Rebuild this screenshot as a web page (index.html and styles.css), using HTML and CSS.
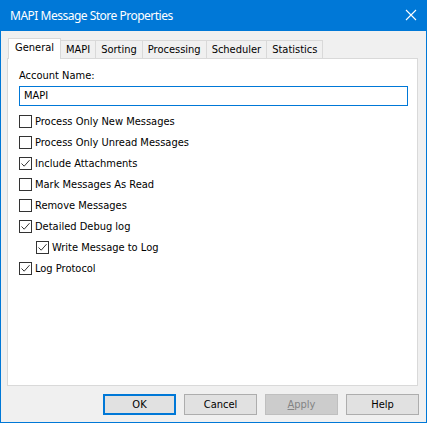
FILE: index.html
```html
<!DOCTYPE html>
<html>
<head>
<meta charset="utf-8">
<link rel="stylesheet" href="styles.css">
</head>
<body>
<div class="window">
  <div class="titlebar">
    <span class="title">MAPI Message Store Properties</span>
    <svg class="close" width="12" height="12" viewBox="0 0 12 12"><path d="M1 1 L11 11 M11 1 L1 11" stroke="#fff" stroke-width="1.1" fill="none"/></svg>
  </div>
  <div class="body">
    <div class="tabs">
      <div class="tab active">General</div>
      <div class="tab">MAPI</div>
      <div class="tab">Sorting</div>
      <div class="tab">Processing</div>
      <div class="tab">Scheduler</div>
      <div class="tab">Statistics</div>
    </div>
    <div class="panel">
      <div class="label">Account Name:</div>
      <div class="textbox">MAPI</div>
      <div class="checks">
        <div class="row"><span class="cb"></span><span>Process Only New Messages</span></div>
        <div class="row"><span class="cb"></span><span>Process Only Unread Messages</span></div>
        <div class="row"><span class="cb on"><svg width="11" height="11" viewBox="0 0 11 11"><path d="M1.5 5.5 L4.2 8.2 L9.5 2.2" stroke="#333" stroke-width="1" fill="none"/></svg></span><span>Include Attachments</span></div>
        <div class="row"><span class="cb"></span><span>Mark Messages As Read</span></div>
        <div class="row"><span class="cb"></span><span>Remove Messages</span></div>
        <div class="row"><span class="cb on"><svg width="11" height="11" viewBox="0 0 11 11"><path d="M1.5 5.5 L4.2 8.2 L9.5 2.2" stroke="#333" stroke-width="1" fill="none"/></svg></span><span>Detailed Debug log</span></div>
        <div class="row indent"><span class="cb on"><svg width="11" height="11" viewBox="0 0 11 11"><path d="M1.5 5.5 L4.2 8.2 L9.5 2.2" stroke="#333" stroke-width="1" fill="none"/></svg></span><span>Write Message to Log</span></div>
        <div class="row"><span class="cb on"><svg width="11" height="11" viewBox="0 0 11 11"><path d="M1.5 5.5 L4.2 8.2 L9.5 2.2" stroke="#333" stroke-width="1" fill="none"/></svg></span><span>Log Protocol</span></div>
      </div>
    </div>
    <div class="buttons">
      <div class="btn default">OK</div>
      <div class="btn">Cancel</div>
      <div class="btn disabled"><u>A</u>pply</div>
      <div class="btn">Help</div>
    </div>
  </div>
</div>
</body>
</html>
```
FILE: styles.css
```css
* { box-sizing: border-box; }
html, body { margin: 0; padding: 0; background: #ffffff; }
body { font-family: "DejaVu Sans Condensed", "DejaVu Sans", sans-serif; font-stretch: condensed; font-size: 11px; color: #000; }
.window {
  width: 427px; height: 423px;
  border: 1px solid #0078d7; border-top: 0;
  background: #f0f0f0;
  display: flex; flex-direction: column;
}
.titlebar {
  height: 31px; background: #0078d7;
  display: flex; align-items: center; justify-content: space-between;
  padding: 0 9px 1px 10px;
  margin: 0 -1px;
  color: #fff;
}
.title { font-family: "Noto Sans", sans-serif; font-stretch: normal; font-size: 12px; letter-spacing: -0.5px; }
.close { margin-right: 1px; }
.body { padding: 7px 8px 0 6px; display: flex; flex-direction: column; }
.tabs { display: flex; align-items: flex-end; height: 20px; padding-left: 1px; position: relative; z-index: 1; }
.tab {
  height: 18px; border: 1px solid #d9d9d9; border-bottom: 0; margin-left: -1px;
  padding: 0 5px; line-height: 17px; background: #f0f0f0;
}
.tab:first-child { margin-left: 0; }
.tab.active {
  height: 21px; background: #fff; margin-bottom: -1px; line-height: 18px;
  padding: 0 6px; margin-right: 0;
}
.tab.active + .tab { margin-left: 0; border-left: 0; }
.panel {
  height: 328px; background: #fff; border: 1px solid #d9d9d9;
  padding: 10px 9px 0 11px;
}
.label { height: 13px; line-height: 13px; margin-bottom: 4px; }
.textbox {
  height: 20px; border: 1px solid #0078d7; padding: 0 4px; line-height: 18px;
}
.checks { margin-top: 9px; display: flex; flex-direction: column; gap: 8px; }
.row { display: flex; align-items: center; height: 13px; gap: 3px; }
.row.indent { padding-left: 17px; }
.cb {
  width: 13px; height: 13px; border: 1px solid #333; background: #fff;
  display: flex; align-items: center; justify-content: center; flex: none;
}
.buttons { display: flex; justify-content: flex-end; gap: 8px; margin-top: 8px; padding-left: 0; margin-right: -1px; }
.btn {
  width: 73px; height: 21px; border: 1px solid #adadad; background: #e1e1e1;
  text-align: center; line-height: 19px;
}
.btn.default { border: 2px solid #0078d7; line-height: 17px; }
.btn.disabled { background: #cccccc; border-color: #bfbfbf; color: #838383; }
```
